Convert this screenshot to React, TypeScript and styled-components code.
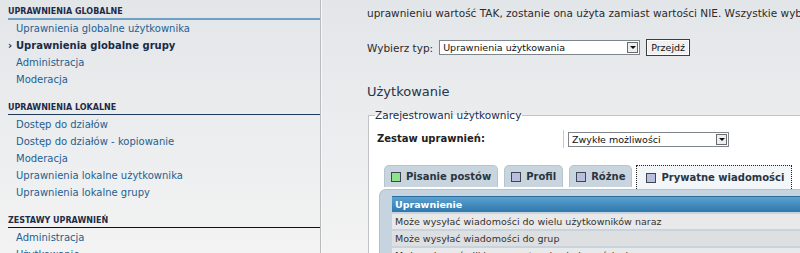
import React from "react";
import styled, { createGlobalStyle } from "styled-components";

const GlobalStyle = createGlobalStyle`
  html, body {
    margin: 0;
    padding: 0;
    overflow: hidden;
  }
  body {
    font-family: "DejaVu Sans", Verdana, sans-serif;
    background: linear-gradient(#e3e6e9, #f3f3f3 253px);
    color: #333;
  }
`;

const Page = styled.div`
  display: flex;
  width: 800px;
  height: 253px;
  overflow: hidden;
`;

const Sidebar = styled.nav`
  width: 312px;
  flex: none;
  padding: 6px 0 0 8px;
  border-right: 1px solid #b9bcbf;
  box-shadow: 1px 0 0 #f7f7f7;
`;

const Section = styled.div`
  margin-bottom: 14px;
`;

const SectionTitle = styled.div<{ $line: string; $thick?: boolean }>`
  font-size: 8px;
  font-weight: bold;
  line-height: 12px;
  text-transform: uppercase;
  color: #1d2c48;
  border-bottom: ${(p) => (p.$thick ? 2 : 1)}px solid ${(p) => p.$line};
  margin-bottom: ${(p) => (p.$thick ? 0 : 1)}px;
`;

const MenuList = styled.ul`
  list-style: none;
  margin: 0;
  padding: 0;
`;

const MenuItem = styled.li<{ $active?: boolean }>`
  font-size: 10px;
  line-height: 17px;
  padding-left: 8px;
  white-space: nowrap;
  color: ${(p) => (p.$active ? "#1a2b47" : "#245f91")};
  font-weight: ${(p) => (p.$active ? "bold" : "normal")};
  &::before {
    content: ${(p) => (p.$active ? '"›"' : "none")};
    display: inline-block;
    width: 8px;
    margin-left: -8px;
    font-weight: bold;
  }
`;

const Main = styled.main`
  flex: 1;
  min-width: 0;
  overflow: hidden;
  padding-left: 46px;
`;

const Intro = styled.p`
  margin: 0;
  padding-top: 6px;
  font-size: 10.5px;
  line-height: 14px;
  white-space: nowrap;
  color: #2b2b2b;
`;

const TypeRow = styled.div`
  display: flex;
  align-items: center;
  gap: 6px;
  margin-top: 19px;
  font-size: 10.5px;
  color: #2b2b2b;
`;

const Select = styled.div<{ $w: number }>`
  display: flex;
  align-items: center;
  justify-content: space-between;
  width: ${(p) => p.$w}px;
  height: 15px;
  box-sizing: border-box;
  border: 1px solid #7f858b;
  background: #fff;
  font-size: 9.5px;
  padding-left: 3px;
  color: #111;
  white-space: nowrap;
`;

const SelectArrow = styled.span`
  width: 11px;
  height: 11px;
  margin-right: 1px;
  box-sizing: border-box;
  border: 1px solid #6c6c6c;
  background: #eceef0;
  display: flex;
  align-items: center;
  justify-content: center;
  &::after {
    content: "";
    border-left: 3px solid transparent;
    border-right: 3px solid transparent;
    border-top: 3px solid #111;
  }
`;

const Button = styled.button`
  height: 17px;
  padding: 0 4px;
  font-family: inherit;
  font-size: 9.5px;
  color: #111;
  background: #eef0f2;
  border: 1px solid #3c3c3c;
  box-shadow: inset 0 0 0 1px #fff;
`;

const Heading = styled.h2`
  margin: 27px 0 0;
  font-size: 13px;
  font-weight: normal;
  line-height: 18px;
  color: #27334a;
`;

const Fieldset = styled.fieldset`
  margin: 8px 0 0 1px;
  padding: 5px 0 0 8px;
  width: 560px;
  border: 1px solid #c0c4c8;
  border-right: none;
  background: #fff;
`;

const Legend = styled.legend`
  padding: 0 1px 0 0;
  margin-left: -2px;
  font-size: 10.5px;
  color: #1c2e50;
`;

const FormRow = styled.div`
  display: flex;
  align-items: center;
  height: 18px;
  margin-top: 4px;
`;

const Label = styled.div`
  width: 186px;
  font-size: 10px;
  font-weight: bold;
  color: #222;
  border-right: 1px solid #c8c8c8;
  line-height: 18px;
`;

const Value = styled.div`
  padding-left: 4px;
`;

const Tabs = styled.div`
  display: flex;
  align-items: flex-end;
  gap: 6px;
  margin-top: 17px;
  padding-left: 7px;
`;

const Tab = styled.div<{ $active?: boolean }>`
  display: flex;
  align-items: center;
  gap: 5px;
  height: ${(p) => (p.$active ? 24 : 22)}px;
  box-sizing: border-box;
  padding: ${(p) => (p.$active ? "0 7px 0 9px" : "0 6px 0 6px")};
  font-size: 10px;
  font-weight: bold;
  color: #2a3440;
  background: ${(p) => (p.$active ? "#f3f6f8" : "#c9d5de")};
  border: 1px ${(p) => (p.$active ? "dotted #222" : "solid #b7c5cf")};
  border-bottom: none;
  border-radius: ${(p) => (p.$active ? "0" : "5px 5px 0 0")};
  margin-bottom: ${(p) => (p.$active ? -2 : 0)}px;
  margin-left: ${(p) => (p.$active ? -2 : 0)}px;
  position: relative;
  white-space: nowrap;
`;

const Box = styled.span<{ $on?: boolean }>`
  width: 10px;
  height: 10px;
  box-sizing: border-box;
  border: 1px solid #3f4650;
  background: ${(p) => (p.$on ? "#8ee38a" : "#b9bde0")};
`;

const Panel = styled.div`
  margin-top: 2px;
  margin-left: 2px;
  padding: 6px 0 0 12px;
  height: 70px;
  background: #c6d4df;
  border-top: 1px solid #b2c2ce;
  border-left: 1px solid #b2c2ce;
  border-top-left-radius: 7px;
`;

const Table = styled.div`
  display: flex;
  flex-direction: column;
  gap: 2px;
  font-size: 9.5px;
`;

const HeadRow = styled.div`
  height: 15px;
  line-height: 15px;
  padding-left: 3px;
  font-weight: bold;
  color: #fff;
  background: linear-gradient(#5aa1d1, #2f78ad);
  border-top: 1px solid #2c6d9d;
`;

const Row = styled.div<{ $alt?: boolean }>`
  height: 15px;
  line-height: 15px;
  padding-left: 3px;
  color: #333;
  white-space: nowrap;
  background: ${(p) => (p.$alt ? "#dedfe0" : "#e9e9e9")};
`;

const sections = [
  {
    title: "Uprawnienia globalne",
    line: "#6f9fc3",
    thick: true,
    items: [
      "Uprawnienia globalne użytkownika",
      "Uprawnienia globalne grupy",
      "Administracja",
      "Moderacja",
    ],
    active: 1,
  },
  {
    title: "Uprawnienia lokalne",
    line: "#1f3a58",
    items: [
      "Dostęp do działów",
      "Dostęp do działów - kopiowanie",
      "Moderacja",
      "Uprawnienia lokalne użytkownika",
      "Uprawnienia lokalne grupy",
    ],
    active: -1,
  },
  {
    title: "Zestawy uprawnień",
    line: "#111",
    items: ["Administracja", "Użytkowanie"],
    active: -1,
  },
];

const tabs = ["Pisanie postów", "Profil", "Różne", "Prywatne wiadomości"];

const rows = [
  "Może wysyłać wiadomości do wielu użytkowników naraz",
  "Może wysyłać wiadomości do grup",
  "Może załączać pliki w prywatnych wiadomościach",
];

const App = () => {
  return (
    <>
      <GlobalStyle />
      <Page>
        <Sidebar>
          {sections.map((s) => (
            <Section key={s.title}>
              <SectionTitle $line={s.line} $thick={s.thick}>
                {s.title}
              </SectionTitle>
              <MenuList>
                {s.items.map((item, i) => (
                  <MenuItem key={item + i} $active={i === s.active}>
                    {item}
                  </MenuItem>
                ))}
              </MenuList>
            </Section>
          ))}
        </Sidebar>
        <Main>
          <Intro>
            uprawnieniu wartość TAK, zostanie ona użyta zamiast wartości NIE.
            Wszystkie wybrane uprawnienia zostaną zapisane.
          </Intro>
          <TypeRow>
            Wybierz typ:
            <Select $w={201}>
              Uprawnienia użytkowania
              <SelectArrow />
            </Select>
            <Button>Przejdź</Button>
          </TypeRow>
          <Heading>Użytkowanie</Heading>
          <Fieldset>
            <Legend>Zarejestrowani użytkownicy</Legend>
            <FormRow>
              <Label>Zestaw uprawnień:</Label>
              <Value>
                <Select $w={161}>
                  Zwykłe możliwości
                  <SelectArrow />
                </Select>
              </Value>
            </FormRow>
            <Tabs>
              {tabs.map((t, i) => (
                <Tab key={t} $active={i === tabs.length - 1}>
                  <Box $on={i === 0} />
                  {t}
                </Tab>
              ))}
            </Tabs>
            <Panel>
              <Table>
                <HeadRow>Uprawnienie</HeadRow>
                {rows.map((r, i) => (
                  <Row key={r} $alt={i % 2 === 1}>
                    {r}
                  </Row>
                ))}
              </Table>
            </Panel>
          </Fieldset>
        </Main>
      </Page>
    </>
  );
};

export default App;
